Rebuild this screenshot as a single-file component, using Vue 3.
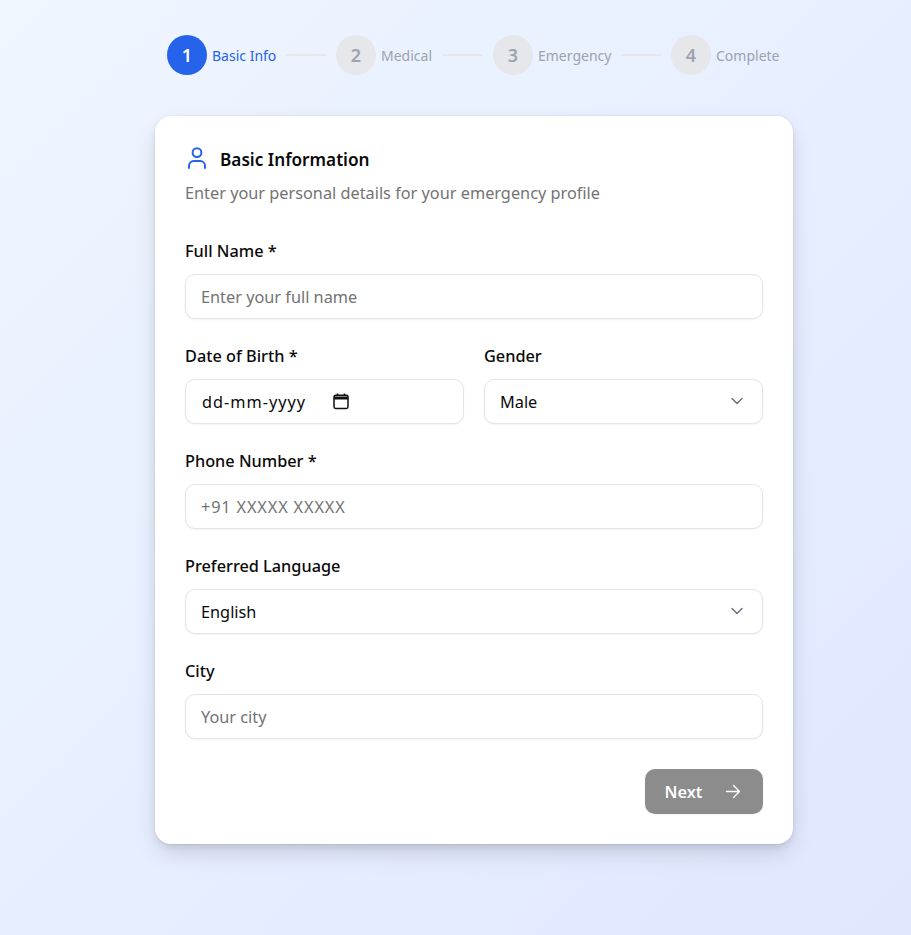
<script setup>
const steps = [
  { n: 1, label: 'Basic Info', width: 64, active: true },
  { n: 2, label: 'Medical', width: 52 },
  { n: 3, label: 'Emergency', width: 73 },
  { n: 4, label: 'Complete', width: 65 },
]
</script>

<template>
  <div class="page">
    <div class="column">
      <nav class="stepper">
        <template v-for="(s, i) in steps" :key="s.n">
          <div class="step" :class="{ active: s.active }">
            <span class="circle">{{ s.n }}</span>
            <span class="step-label" :style="{ width: s.width + 'px' }">{{ s.label }}</span>
          </div>
          <span v-if="i < steps.length - 1" class="line"></span>
        </template>
      </nav>

      <section class="card">
        <header class="head">
          <svg class="user" width="24" height="24" viewBox="0 0 24 24" fill="none" stroke="#2563eb" stroke-width="2" stroke-linecap="round" stroke-linejoin="round">
            <circle cx="12" cy="6.600" r="4.400" />
            <path d="M4 22v-2.200a4.800 4.800 0 0 1 4.800-4.800h6.400a4.800 4.800 0 0 1 4.800 4.800V22" />
          </svg>
          <h1>Basic Information</h1>
        </header>
        <p class="sub">Enter your personal details for your emergency profile</p>

        <div class="fields">
          <div class="field">
            <label>Full Name *</label>
            <input class="control" type="text" placeholder="Enter your full name" />
          </div>

          <div class="row">
            <div class="field">
              <label>Date of Birth *</label>
              <div class="control date">
                <span class="date-text">dd-mm-yyyy</span>
                <svg class="cal" width="18" height="18" viewBox="0 0 18 18" fill="none">
                  <path d="M3.600 3.200h10.800a1.600 1.600 0 0 1 1.600 1.600v10a1.600 1.600 0 0 1-1.600 1.600H3.600A1.600 1.600 0 0 1 2 14.800v-10a1.600 1.600 0 0 1 1.600-1.600Z" stroke="#111" stroke-width="1.500" />
                  <path d="M2 4.500h14v3H2z" fill="#111" />
                  <path d="M5.500 1.500v2.500M12.500 1.500v2.500" stroke="#111" stroke-width="1.600" />
                </svg>
              </div>
            </div>
            <div class="field">
              <label>Gender</label>
              <div class="select-wrap">
                <select class="control">
                  <option>Male</option>
                  <option>Female</option>
                  <option>Other</option>
                </select>
                <svg class="chev" width="16" height="16" viewBox="0 0 16 16" fill="none" stroke="#6b7280" stroke-width="1.500" stroke-linecap="round" stroke-linejoin="round"><path d="m3 5.500 5 5 5-5" /></svg>
              </div>
            </div>
          </div>

          <div class="field">
            <label>Phone Number *</label>
            <input class="control phone" type="text" placeholder="+91 XXXXX XXXXX" />
          </div>

          <div class="field">
            <label>Preferred Language</label>
            <div class="select-wrap">
              <select class="control">
                <option>English</option>
                <option>Hindi</option>
              </select>
              <svg class="chev" width="16" height="16" viewBox="0 0 16 16" fill="none" stroke="#6b7280" stroke-width="1.500" stroke-linecap="round" stroke-linejoin="round"><path d="m3 5.500 5 5 5-5" /></svg>
            </div>
          </div>

          <div class="field">
            <label>City</label>
            <input class="control" type="text" placeholder="Your city" />
          </div>
        </div>

        <div class="actions">
          <button class="next" type="button">
            <span>Next</span>
            <svg width="20" height="20" viewBox="0 0 20 20" fill="none" stroke="#fff" stroke-width="1.300" stroke-linecap="round" stroke-linejoin="round"><path d="M3.500 9.500h13M10.500 3.500l6 6-6 6" /></svg>
          </button>
        </div>
      </section>
    </div>
  </div>
</template>

<style>
html, body { margin: 0; }
</style>

<style scoped>
.page {
  min-height: 935px;
  box-sizing: border-box;
  padding: 35px 118px 0 155px;
  background: linear-gradient(135deg, #eff6ff 0%, #e0e7ff 100%);
  font-family: "Noto Sans", "Open Sans", sans-serif;
  color: #0a0a0a;
}
.column { width: 638px; }
.stepper {
  display: flex;
  justify-content: center;
  align-items: center;
  gap: 10px;
  height: 40px;
}
.step { display: flex; align-items: center; gap: 5px; }
.circle {
  width: 40px;
  height: 40px;
  border-radius: 50%;
  background: #e5e7eb;
  color: #9ca3af;
  display: flex;
  align-items: center;
  justify-content: center;
  font-size: 18px;
  font-weight: 600;
}
.step-label { font-size: 14px; color: #9ca3af; white-space: nowrap; }
.step.active .circle { background: #2563eb; color: #fff; }
.step.active .step-label { color: #2563eb; }
.line { width: 40px; height: 2px; background: #e5e7eb; margin-top: -1px; }

.card {
  margin-top: 41px;
  box-sizing: border-box;
  height: 728px;
  padding: 30px;
  background: #fff;
  border-radius: 16px;
  box-shadow: 0 0 0 1px rgba(0, 0, 0, 0.03), 0 10px 25px -3px rgba(0, 0, 0, 0.15), 0 4px 8px -2px rgba(0, 0, 0, 0.1);
}
.head { display: flex; align-items: center; gap: 11px; height: 28px; }
.user { flex: none; margin-top: -4px; }
h1 { margin: 0; font-size: 17.2px; font-weight: 600; line-height: 28px; }
.sub { margin: 7px 0 0; font-size: 16.3px; line-height: 24px; color: #737373; }
.fields { margin-top: 35px; display: flex; flex-direction: column; gap: 26px; }
.row { display: grid; grid-template-columns: 1fr 1fr; gap: 20px; }
.field { display: flex; flex-direction: column; gap: 12px; min-width: 0; }
label { font-size: 16.3px; font-weight: 500; line-height: 22px; }
.control {
  box-sizing: border-box;
  width: 100%;
  height: 45px;
  padding: 0 15px;
  border: 1px solid #e5e5e5;
  border-radius: 10px;
  background: #fff;
  font: inherit;
  font-size: 16.3px;
  color: #0a0a0a;
  box-shadow: 0 1px 2px rgba(0, 0, 0, 0.05);
  outline: none;
}
.control::placeholder { color: #737373; opacity: 1; }
.phone::placeholder { letter-spacing: 0.85px; }
.date { display: flex; align-items: center; gap: 26px; padding-left: 16px; }
.date-text { letter-spacing: 1px; }
.cal { flex: none; margin-top: -2px; }
.select-wrap { position: relative; }
select.control { appearance: none; -webkit-appearance: none; display: block; }
.chev { position: absolute; right: 18px; top: 14px; pointer-events: none; }
.actions { margin-top: 30px; display: flex; justify-content: flex-end; }
.next {
  width: 118px;
  height: 45px;
  display: flex;
  align-items: center;
  justify-content: center;
  gap: 21px;
  border: 0;
  border-radius: 10px;
  background: #8c8c8c;
  color: #fff;
  font: inherit;
  font-size: 16.3px;
  font-weight: 600;
  box-shadow: 0 1px 2px rgba(0, 0, 0, 0.05);
  padding: 0;
}
</style>
